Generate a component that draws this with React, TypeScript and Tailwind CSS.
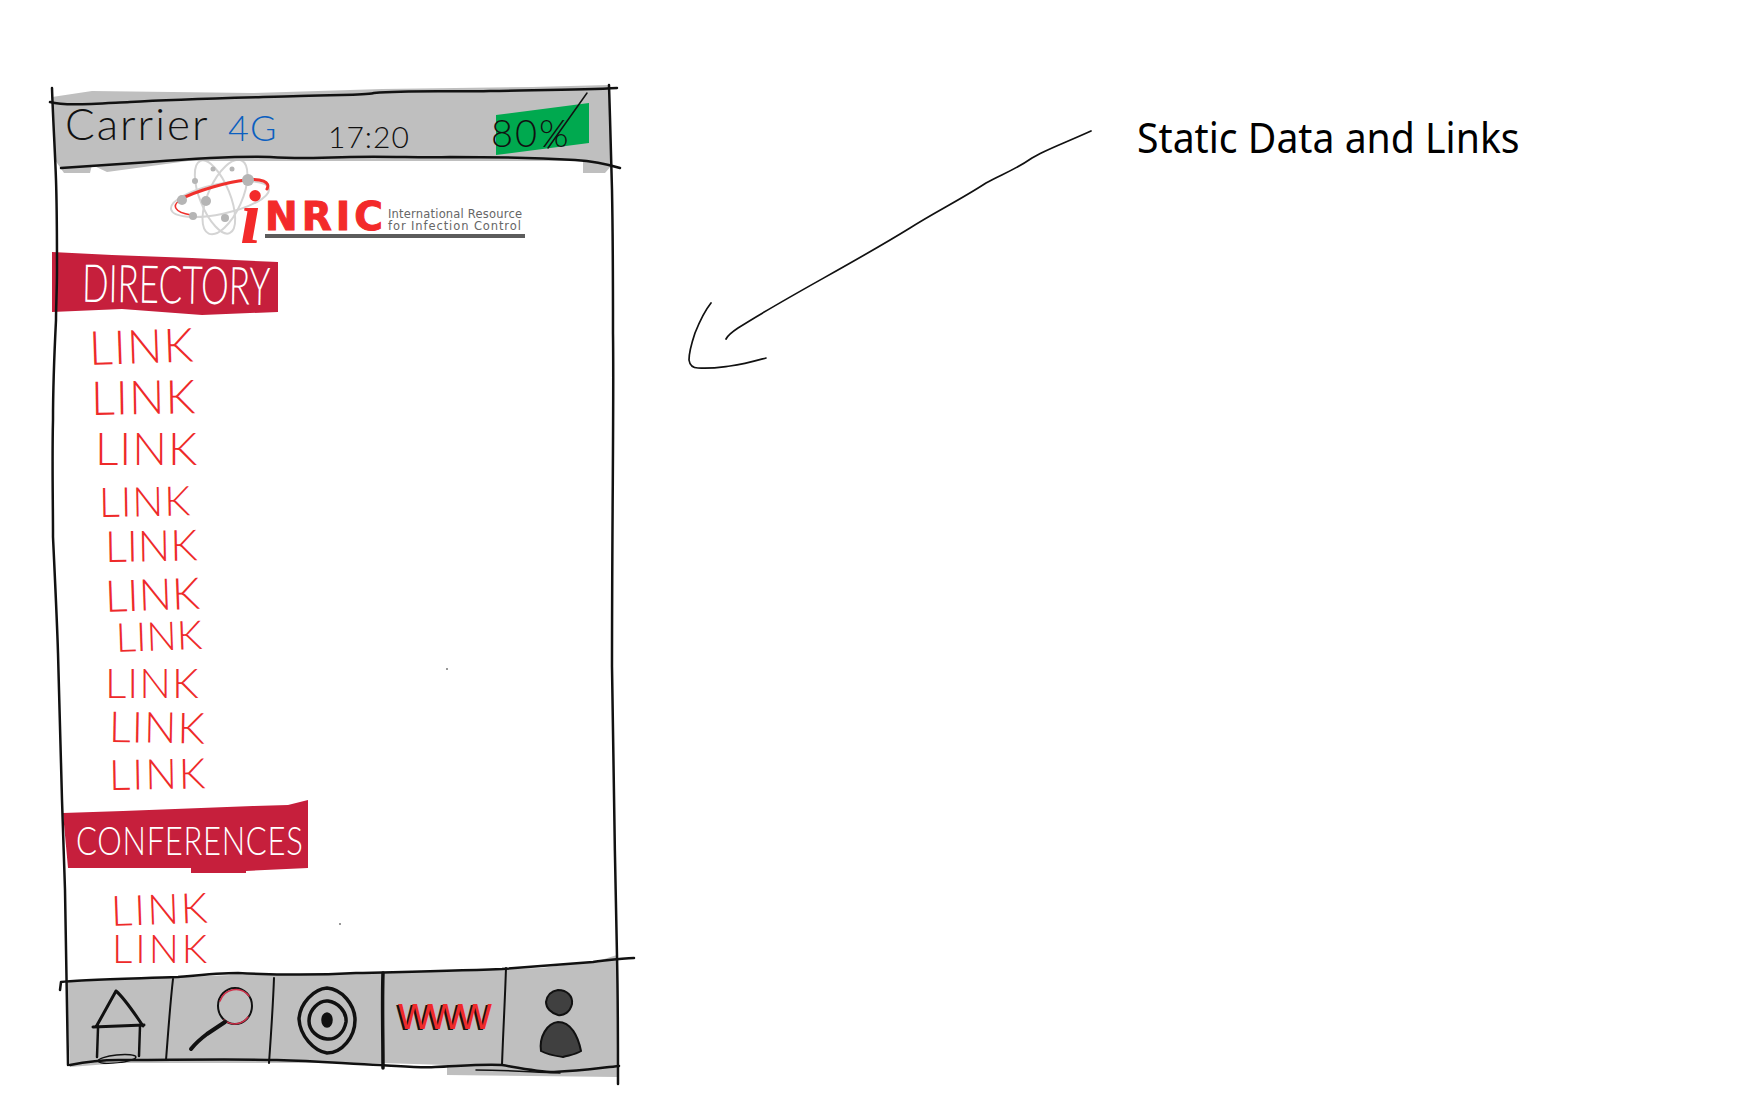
const linkRows = [
  "h-[50px] ml-[37px] text-[47px] tracking-[1px] -rotate-2",
  "h-[50px] ml-[39px] text-[47px] tracking-[1px] -rotate-1",
  "h-[57px] ml-[43px] text-[46px] tracking-[1px]",
  "h-[43px] ml-[47px] text-[41px] tracking-[1px] -rotate-1",
  "h-[49px] ml-[53px] text-[43px] -rotate-1",
  "h-[43px] ml-[53px] text-[44px] -rotate-2",
  "h-[45px] ml-[64px] text-[40px] -rotate-2",
  "h-[43px] ml-[53px] text-[42px] tracking-[1px]",
  "h-[49px] ml-[57px] text-[43px] tracking-[1px] rotate-1",
  "h-[43px] ml-[57px] text-[42px] tracking-[2px] -rotate-1",
];

function LinkRow({ className }: { className: string }) {
  return (
    <div className={`w-max origin-left font-light leading-[.85] text-[#ee2a2a] ${className}`}>LINK</div>
  );
}

function StatusBar() {
  return (
    <div className="flex h-[90px] w-[560px] items-start bg-[#bfbfbf] font-light leading-none text-[#111] [clip-path:polygon(0_12px,40px_6px,200px_8px,330px_4px,480px_2px,556px_0,560px_80px,553px_88px,531px_88px,531px_76px,136px_76px,55px_87px,40px_80px,38px_88px,12px_88px,3px_75px)]">
      <span className="ml-[13px] mt-[16px] w-[163px] text-[44px] tracking-[2px]">Carrier</span>
      <span className="mt-[24px] w-[100px] text-[36px] tracking-[1px] text-[#0b5fc0]">4G</span>
      <span className="mt-[36px] w-[168px] text-[30px] tracking-[1px]">17:20</span>
      <div className="relative mt-[18px] h-[52px] w-[93px]">
        <div className="absolute inset-0 bg-[#00a94f] [clip-path:polygon(0_12px,100%_0,100%_40px,0_100%)]" />
        <span className="absolute -left-[5px] top-[10px] text-[38px] tracking-[2px]">80%</span>
      </div>
    </div>
  );
}

function Atom() {
  return (
    <svg viewBox="165 155 105 85" className="h-[85px] w-[105px] shrink-0" fill="none">
      <g stroke="#d4d4d4" strokeWidth="2">
        <ellipse cx="217" cy="197" rx="50" ry="15" transform="rotate(-12 217 197)" />
        <ellipse cx="212" cy="195" rx="15" ry="39" transform="rotate(-22 212 195)" />
        <ellipse cx="222" cy="195" rx="17" ry="40" transform="rotate(24 222 195)" />
      </g>
      <path d="M176 198C195 188 225 180 243 178C258 176 268 180 264 187" stroke="#f0302c" strokeWidth="3" strokeLinecap="round" />
      <path d="M176 199C170 203 170 210 188 213" stroke="#f0302c" strokeWidth="1.5" />
      <g fill="#b5b5b5">
        <circle cx="179" cy="198" r="5" />
        <circle cx="192" cy="179" r="3" />
        <circle cx="210" cy="167" r="2.5" />
        <circle cx="229" cy="167" r="2.5" />
        <circle cx="245" cy="178" r="6" />
        <circle cx="203" cy="199" r="5" />
        <circle cx="190" cy="214" r="4" />
        <circle cx="222" cy="216" r="4" />
      </g>
    </svg>
  );
}

function Logo() {
  return (
    <div className="-mt-[18px] ml-[116px] flex h-[84px] w-max items-start">
      <Atom />
      <div className="relative -ml-[33px] h-[84px] w-[285px]">
        <span className="absolute left-0 top-[22px] font-['Liberation_Serif'] text-[76px] font-bold italic leading-none text-[#f32a2a]">i</span>
        <span className="absolute left-[25px] top-[40px] font-['DejaVu_Sans'] text-[39px] font-bold leading-none tracking-[4px] text-[#f32a2a] [-webkit-text-stroke:1px_#f32a2a]">NRIC</span>
        <div className="absolute left-[148px] top-[51px] w-[140px] font-['DejaVu_Sans'] text-[11.5px] leading-[12px] text-[#666]">
          <div className="tracking-[0.2px]">International Resource</div>
          <div className="tracking-[0.9px]">for Infection Control</div>
        </div>
        <div className="absolute bottom-[3px] left-[25px] h-[4px] w-[260px] bg-[#5c5c5c]" />
      </div>
    </div>
  );
}

function HomeIcon() {
  return (
    <svg viewBox="90 985 62 78" className="h-[78px] w-[62px]" fill="none" stroke="#111" strokeWidth="3" strokeLinecap="round">
      <path d="M117 989L97 1025M117 989C124 995 136 1012 144 1024M94 1025L145 1023" />
      <path d="M99 1026L98 1055M141 1024L140 1054" strokeWidth="2.5" />
      <ellipse cx="118" cy="1057" rx="19" ry="4" strokeWidth="1.5" transform="rotate(-6 118 1057)" />
    </svg>
  );
}

function SearchIcon() {
  return (
    <svg viewBox="188 985 68 68" className="h-[68px] w-[68px]" fill="none" stroke="#111" strokeLinecap="round">
      <ellipse cx="236" cy="1005" rx="17" ry="18" strokeWidth="2" />
      <path d="M221 1000A17 18 0 0 1 250 995M225 1019A17 18 0 0 0 249 1016" stroke="#d0304a" strokeWidth="1.5" />
      <path d="M226 1021L208 1033C200 1039 196 1043 192 1048" strokeWidth="4" />
    </svg>
  );
}

function TargetIcon() {
  return (
    <svg viewBox="293 980 64 74" className="h-[74px] w-[64px]" fill="none" stroke="#111" strokeWidth="3.5">
      <path d="M325 985C340 986 353 1002 353 1017C353 1034 340 1050 325 1050C312 1048 298 1033 297 1016C298 1000 312 986 325 985Z" />
      <path d="M326 998C335 999 345 1008 344 1019C342 1030 334 1037 325 1036C316 1035 307 1028 307 1018C307 1007 317 997 326 998Z" />
      <ellipse cx="325" cy="1017" rx="4" ry="6" fill="#111" />
    </svg>
  );
}

function PersonIcon() {
  return (
    <svg viewBox="532 985 56 78" className="h-[78px] w-[56px]" fill="#404040" stroke="#111" strokeWidth="2">
      <path d="M557 991C566 991 572 997 571 1005C569 1013 563 1017 557 1016C550 1014 545 1009 545 1003C546 996 551 992 557 991Z" />
      <path d="M540 1052C538 1038 546 1024 557 1023C570 1023 577 1037 580 1052C574 1056 568 1056 562 1058C555 1057 547 1056 540 1052Z" />
    </svg>
  );
}

function TabBar() {
  return (
    <div className="ml-[9px] grid h-[123px] w-[557px] grid-cols-[109px_102px_111px_121px_114px] bg-[#bfbfbf] pt-[7px] [clip-path:polygon(5px_27px,170px_20px,300px_18px,480px_13px,540px_5px,556px_0,556px_122px,386px_120px,386px_110px,320px_108px,60px_108px,9px_112px)]">
      <div className="flex items-center justify-center pl-[8px] pt-[12px]"><HomeIcon /></div>
      <div className="flex items-center justify-center"><SearchIcon /></div>
      <div className="flex items-center justify-center pr-[2px]"><TargetIcon /></div>
      <div className="flex items-center justify-center pb-[14px]">
        <span className="font-['Liberation_Sans'] text-[46px] font-normal leading-none tracking-[-3px] text-[#ee2a2a] [text-shadow:-2px_1px_0_#111]">www</span>
      </div>
      <div className="flex items-center justify-center pt-[6px]"><PersonIcon /></div>
    </div>
  );
}

// hand drawn frame around the phone, in page coordinates
function PhoneOutline() {
  return (
    <svg viewBox="52 85 584 1005" className="pointer-events-none absolute left-0 top-0 h-[1005px] w-[584px] overflow-visible" fill="none" stroke="#111" strokeLinecap="round" strokeLinejoin="round">
      <path strokeWidth="2.5" d="M50 102C65 106 90 104 130 102C180 99 230 98 300 96C340 94 360 96 374 93C410 90 450 92 490 91C540 90 585 90 617 88" />
      <path strokeWidth="2.5" d="M61 168C90 166 120 164 150 162C190 159 230 156 270 157C300 159 320 158 350 157C390 156 420 158 450 157C500 157 540 158 575 160C590 161 610 165 620 168" />
      <path strokeWidth="2.5" d="M52 88C53 120 55 150 56 180C57 210 57 240 57 270C57 290 56 305 56 320C54 360 53 390 53 420C52 460 53 500 53 537C55 580 57 620 58 653C59 700 61 750 62 800C63 830 64 860 65 890C66 950 67 1010 68 1065" />
      <path strokeWidth="2.5" d="M609 85C610 120 611 145 612 190C613 240 613 290 613 334C614 400 612 520 612 667C613 760 615 860 617 956C618 1000 618 1050 618 1084" />
      <path strokeWidth="2.5" d="M60 990L61 982C75 980 120 979 178 977C200 975 220 973 238 973C280 975 320 975 356 973C400 972 450 971 502 969C540 966 570 964 593 962C610 960 622 958 634 958" />
      <path strokeWidth="2.5" d="M70 1065C85 1062 100 1060 119 1060C170 1060 230 1059 277 1060C320 1061 350 1064 380 1065C400 1066 420 1068 435 1067C460 1066 480 1064 502 1065C525 1069 540 1072 554 1072C580 1071 600 1068 619 1066" />
      <path strokeWidth="1.5" d="M476 1070C510 1070 530 1072 560 1073" />
      <path strokeWidth="2" d="M173 979C170 1005 168 1035 166 1060" />
      <path strokeWidth="2" d="M274 978C273 1005 271 1035 269 1063" />
      <path strokeWidth="3.5" d="M383 973C382 1005 383 1035 383 1068" />
      <path strokeWidth="2" d="M506 968C505 1000 503 1035 502 1065" />
      <path strokeWidth="1.5" d="M548 148L587 93" />
      <circle cx="447" cy="669" r="1" fill="#777" stroke="none" />
      <circle cx="340" cy="924" r="1" fill="#777" stroke="none" />
    </svg>
  );
}

function Arrow() {
  return (
    <svg viewBox="680 125 420 250" className="ml-[62px] mt-[40px] h-[250px] w-[420px] shrink-0" fill="none" stroke="#111" strokeWidth="1.7" strokeLinecap="round">
      <path d="M1091 131C1060 145 1045 150 1032 158C1015 170 1000 175 986 183C960 200 935 212 910 228C850 265 790 295 738 328C732 332 728 335 726 339" />
      <path d="M711 303C703 313 699 323 695 333C692 342 689 352 689 360C690 367 694 368 698 368C712 369 722 367 730 366C745 364 755 361 766 358" />
    </svg>
  );
}

export default function App() {
  return (
    <div className="flex h-[1120px] w-[1744px] items-start overflow-hidden bg-white pl-[52px] pt-[85px] font-['Lato',sans-serif]">
      <div className="relative w-[566px] shrink-0">
        <StatusBar />
        <Logo />
        <div className="mt-[11px] flex h-[63px] w-[226px] items-center bg-[#c61f3c] pb-[4px] pl-[30px] text-[35px] font-light leading-none text-white [clip-path:polygon(0_0,60px_3px,140px_6px,226px_10px,226px_60px,150px_63px,70px_57px,0_60px)]">
          <span className="origin-left rotate-1 scale-y-150">DIRECTORY</span>
        </div>
        <div className="pt-[13px]">
          {linkRows.map((row) => (
            <LinkRow key={row} className={row} />
          ))}
        </div>
        <div className="ml-[11px] flex h-[73px] w-[245px] items-center bg-[#c61f3c] pl-[13px] pt-[8px] text-[31px] font-light leading-none tracking-[.7px] text-white [clip-path:polygon(0_13px,60px_11px,190px_6px,225px_5px,245px_0,245px_68px,183px_71px,183px_73px,128px_73px,128px_68px,5px_68px)]">
          <span className="origin-left scale-y-125">CONFERENCES</span>
        </div>
        <div className="pt-[20px]">
          <LinkRow className="h-[38px] ml-[59px] text-[42px] tracking-[2px] -rotate-2" />
          <LinkRow className="h-[24px] ml-[60px] text-[40px] tracking-[3px]" />
        </div>
        <TabBar />
        <PhoneOutline />
      </div>
      <Arrow />
      <div className="ml-[37px] mt-[32px] origin-left scale-x-[.955] whitespace-nowrap font-['Noto_Sans',sans-serif] text-[41px] leading-none text-black">
        Static Data and Links
      </div>
    </div>
  );
}
